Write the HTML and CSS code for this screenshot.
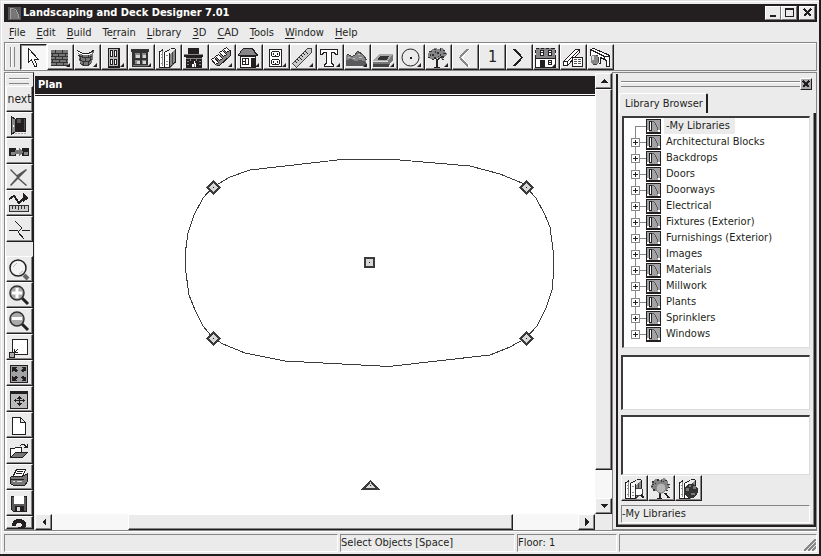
FILE: index.html
```
<!doctype html>
<html lang="en">
  <head>
    <meta charset="UTF-8" />
    <meta name="viewport" content="width=device-width, initial-scale=1.0" />
    <title>Landscaping and Deck Designer 7.01</title>
    <link rel="stylesheet" href="styles.css">
  </head>
  <body>
    <svg class="defs" aria-hidden="true">
      <symbol id="library" viewBox="0 0 15 15">
        <rect width="15" height="15" fill="#231f20" />
        <rect x="1" y="1" width="13" height="12" fill="#a2a2a4" />
        <path d="M3 2h3v10H3z" fill="#231f20" />
        <path d="M4 3h1v8H4z" fill="#fff" />
        <path d="M6 2h2v1H6zM8 3h1v1H8zM9 4h1v2H9zM10 6h1v2h-1zM11 8h1v3h-1z" fill="#5a5a5c" />
        <path d="M1 11h2v2H1zM12 11h2v2h-2z" fill="#fff" />
      </symbol>
      <symbol id="books" viewBox="0 0 24 23">
        <path d="M3 6h5v15H3zM9 6h4v15H9z" fill="#fff" />
        <path d="M14 8l5-5v14l-5 5z" fill="#8a8a8c" />
        <path d="M3 6h1v15H3zM8 6h1v15H8zM13 7h1v14h-1zM19 3h1v14h-1zM3 21h11v1H3zM3 5h2v1H3zM5 4h1v1H5zM6 3h1v2H6zM9 5h2v1H9zM11 4h2v1h-2zM13 3h1v1h-1zM15 2h4v1h-4zM14 21h1v-1h1v-1h1v-1h1v-1h1v-1h-1v1h-1v1h-1v1h-1v1h-1z" fill="#231f20" />
        <path d="M5 8h2v1H5zM5 11h2v1H5zM5 17h2v1H5zM10 9h2v1h-2zM10 15h2v1h-2zM10 18h2v1h-2zM6 5h1v15H6z" fill="#8a8a8c" />
        <path d="M16 6h1v13h-1z" fill="#444" />
      </symbol>
    </svg>

    <div class="window">
      <header class="titlebar">
        <svg class="app-icon" width="13" height="13">
          <rect width="13" height="13" fill="#555" />
          <path d="M3 2q8 2 9 10H3z" fill="#777" />
          <path d="M2 1h1v11H2zM3 1h3v1H3zM6 2h2v1H6zM8 3h1v2H8zM9 5h1v2H9zM10 7h1v4h-1z" fill="#a2a2a4" />
        </svg>
        <h1>Landscaping and Deck Designer 7.01</h1>
        <div class="window-buttons">
          <button aria-label="Minimize"><svg width="11" height="10"><path d="M2 7h6v2H2z" fill="#231f20" /></svg></button>
          <button aria-label="Maximize"><svg width="11" height="10"><path d="M1 0h9v9H1zM2 2v6h7V2z" fill="#231f20" fill-rule="evenodd" /></svg></button>
          <button class="close" aria-label="Close"><svg width="11" height="10"><path d="M2 1l7 7M9 1L2 8" stroke="#231f20" stroke-width="2" /></svg></button>
        </div>
      </header>

      <nav class="menu">
        <button><u>F</u>ile</button>
        <button><u>E</u>dit</button>
        <button><u>B</u>uild</button>
        <button>Te<u>r</u>rain</button>
        <button><u>L</u>ibrary</button>
        <button><u>3</u>D</button>
        <button><u>C</u>AD</button>
        <button><u>T</u>ools</button>
        <button><u>W</u>indow</button>
        <button><u>H</u>elp</button>
      </nav>

      <div class="toolbar">
        <span class="grip-v"></span>
        <button class="tool pressed" aria-label="Select Objects">
          <svg><path d="M7.500 2.500v14l3-3 3 7h2v-2l-2-5h4z" fill="#fff" stroke="#231f20" /></svg>
        </button>
        <button class="tool more" aria-label="Wall">
          <svg>
            <rect x="3" y="4" width="17" height="16" fill="#777" />
            <path d="M3 7.500h17M3 10.500h17M3 13.500h17M3 16.500h17M3 19.500h17M7.500 4v3M14.500 4v3M4.500 8v3M10.500 8v3M17.500 8v3M7.500 11v3M14.500 11v3M4.500 14v3M11.500 14v3M18.500 14v3M8.500 17v3M15.500 17v3" stroke="#333" />
          </svg>
        </button>
        <button class="tool more" aria-label="Curved Wall">
          <svg>
            <path d="M3 5q8 6 16-1l-2 13q-6 6-12 1z" fill="#777" />
            <path d="M3.500 9.500q8 5 14 0M4.500 13.500q7 5 12 0M5.500 17.500q6 5 10 0" fill="none" stroke="#333" />
            <path d="M7.500 8v3M13.500 8v4M5.500 11v4M10.500 12v3M15.500 11v3M8.500 15v4M13.500 15v4" stroke="#333" />
            <path d="M2.500 4.500q8 7 17-1" fill="none" stroke="#231f20" />
            <path d="M3.500 6.500q8 5 14 0" fill="none" stroke="#fff" />
          </svg>
        </button>
        <button class="tool more" aria-label="Door">
          <svg>
            <rect x="6" y="2" width="12" height="20" fill="#231f20" />
            <rect x="7" y="3" width="9" height="17" fill="#bbb" />
            <path d="M8.500 4.500h2v6h-2zM12.500 4.500h2v6h-2zM8.500 13.500h2v5h-2zM12.500 13.500h2v5h-2z" fill="#fff" stroke="#231f20" />
          </svg>
        </button>
        <button class="tool more" aria-label="Window">
          <svg>
            <path d="M2 3h18v3h-1v15H3V6H2z" fill="#333" />
            <path d="M6 7h5v5H6zM13 7h4v5h-4zM6 14h5v4H6zM13 14h4v4h-4z" fill="#888" />
            <path d="M7 9h4v3H7zM14 9h3v3h-3zM8 15h3v3H8zM14 15h3v3h-3z" fill="#d5d5d6" />
            <path d="M4 19h15v1H4z" fill="#777" />
          </svg>
        </button>
        <button class="tool" aria-label="Cabinet"><svg><use href="#books" /></svg></button>
        <button class="tool" aria-label="Fireplace">
          <svg>
            <path d="M5 2h11v6h4v3h-1v11H3V11H1V8h4z" fill="#231f20" />
            <path d="M1 8h19v1H1zM3 12h16v1H3z" fill="#868688" />
            <path d="M4 15h2v1H4zM16 15h2v1h-2zM4 18h2v1H4zM16 18h2v1h-2zM7 13h1v2H7zM13 13h1v2h-1z" fill="#868688" />
            <path d="M11 15h1v2h1v4H9v-3h2z" fill="#fff" />
            <path d="M11 18h1v3h-1z" fill="#868688" />
          </svg>
        </button>
        <button class="tool more" aria-label="Stairs">
          <svg>
            <path d="M3 14L16 4h4v6L9 20H6z" fill="#868688" />
            <path d="M1.500 13.500l3-2 4 5-3 2zM5.500 10.500l3-2 4 4-3 2zM9.500 6.500l3-2 4 4-3 2zM13.500 3.500l3-2 3 3-3 2z" fill="#fff" stroke="#231f20" />
            <path d="M6.500 19.500h3l11-10v-6" fill="none" stroke="#231f20" />
          </svg>
        </button>
        <button class="tool more" aria-label="Roof">
          <svg>
            <path d="M6 2h10l5 7v1H1V9z" fill="#231f20" />
            <path d="M6 3h9l4 6H2z" fill="#868688" />
            <path d="M3 10h16v12H3z" fill="#231f20" />
            <path d="M4 11h14v10H4z" fill="#fff" />
            <path d="M5 12h7v7H5zM14 12h4v9h-4z" fill="#231f20" />
            <path d="M6 13h2v2H6zM9 13h2v5H9zM6 16h2v2H6z" fill="#fff" />
          </svg>
        </button>
        <button class="tool more" aria-label="Electrical">
          <svg>
            <rect x="5.500" y="3.500" width="12" height="17" rx="1" fill="#fff" stroke="#231f20" />
            <path d="M8 5h7v1H8zM7 6h1v4H7zM15 6h1v4h-1zM8 10h7v1H8zM8 13h7v1H8zM7 14h1v4H7zM15 14h1v4h-1zM8 18h7v1H8zM9 7h1v2H9zM13 7h1v2h-1zM11 9h1v1h-1zM9 15h1v2H9zM13 15h1v2h-1zM11 17h1v1h-1z" fill="#231f20" />
          </svg>
        </button>
        <button class="tool more" aria-label="Dimension">
          <svg>
            <path d="M1.500 17.500l15-15h4v4l-15 15z" fill="#ccc" stroke="#444" />
            <path d="M4 15l2 2M6 13l2 2M8 11l3 3M10 9l2 2M12 7l2 2M14 5l3 3" stroke="#231f20" />
          </svg>
        </button>
        <button class="tool more" aria-label="Text">
          <svg><path d="M2.500 3.500h17v5h-2l-1-2h-3v11l2 1v2h-9v-2l2-1v-11h-3l-1 2h-2z" fill="#fff" stroke="#231f20" /></svg>
        </button>
        <button class="tool more" aria-label="Terrain">
          <svg>
            <path d="M1 9h2l3 1 3-1 3-3 4 1 3 3 2 4v6H1z" fill="#868688" />
            <path d="M1 14l5-1 4 2 6-1 5 2v4H1z" fill="#5a5a5c" />
            <path d="M1.500 8.500h2l3 2 3-1 3-4 4 2 3 3 2 4" fill="none" stroke="#444" />
            <path d="M3 11h2v1H3zM8 12h2v1H8zM13 8h2v1h-2zM14 11h3v1h-3z" fill="#bbb" />
          </svg>
        </button>
        <button class="tool more" aria-label="Pool">
          <svg>
            <path d="M1 15l6-7h14v6l-5 7H1z" fill="#777" />
            <path d="M1 15l6-7h14l-5 7z" fill="#aaa" />
            <path d="M5 13l3-3h9l-2 4H7z" fill="#333" />
            <path d="M1 15h15v1H1z" fill="#ddd" />
            <path d="M1 18h16v3H1z" fill="#444" />
          </svg>
        </button>
        <button class="tool more" aria-label="Circle">
          <svg>
            <circle class="smooth" cx="11.500" cy="11.500" r="8.500" fill="none" stroke="#231f20" />
            <rect x="11" y="11" width="2" height="2" fill="#231f20" />
          </svg>
        </button>
        <button class="tool more" aria-label="Plant">
          <svg>
            <path d="M7 3l2-1 4 1 4-1 2 3 2 3-2 2-2 3-4-1-4 1H5l-3-2V8l2-3z" fill="#868688" />
            <path d="M3 5h3v1H3zM8 3h2v1H8zM14 2h1v3h-1zM17 7h3v1h-3zM11 6h2v2h-2zM6 8h2v2H6zM2 11h2v1H2zM15 10h3v2h-3zM8 11h2v2H8zM17 4h2v1h-2zM9 5h1v2H9zM4 8h1v2H4zM14 8h1v2h-1zM12 10h1v1h-1zM6 13h2v1H6zM16 13h2v1h-2z" fill="#333" />
            <path d="M10 21v-7l-3-3 4 2 4-2-3 3v7zM8 21h6v1H8z" fill="#231f20" />
          </svg>
        </button>
        <button class="tool" aria-label="Previous floor">
          <svg><path d="M15 3L7 11.500l8 9" fill="none" stroke="#888" stroke-width="2" /><path d="M17 3l-8 8.500 8 9" fill="none" stroke="#fff" /></svg>
        </button>
        <button class="tool floor">1</button>
        <button class="tool" aria-label="Next floor">
          <svg><path d="M7 3l8 8.500-8 8.500" fill="none" stroke="#231f20" stroke-width="2" /></svg>
        </button>
        <button class="tool more" aria-label="Reference floor">
          <svg>
            <path d="M2 2h19v10H2z" fill="#868688" />
            <path d="M2 2h3v1H2zM7 2h3v1H7zM12 2h3v1h-3zM17 2h4v1h-4zM1 4h1v3H1zM1 9h1v3H1zM21 4h1v3h-1zM21 9h1v3h-1zM1 12h21v1H1zM1 13h1v8H1zM21 13h1v8h-1zM1 21h21v1H1z" fill="#231f20" />
            <path d="M2 13h19v8H2z" fill="#fff" />
            <path d="M6 4h4v6H6zM14 4h4v6h-4zM14 14h4v5h-4zM6 14h5v7H6z" fill="#231f20" />
            <path d="M7 5h2v1H7zM7 7h2v2H7zM15 5h2v1h-2zM15 7h2v2h-2zM15 15h2v1h-2zM15 17h2v1h-2z" fill="#fff" />
          </svg>
        </button>
        <button class="tool" aria-label="Materials list">
          <svg>
            <path d="M2.500 15.500l12-12h4v3l-12 13h-4zM2.500 15.500h4v4M6.500 15.500l12-12" fill="#fff" stroke="#231f20" />
            <rect x="11.500" y="11.500" width="10" height="9" fill="#fff" stroke="#231f20" />
            <path d="M13 13h3v1h-3zM17 13h3v1h-3zM13 15h3v1h-3zM17 15h3v1h-3zM13 17h3v1h-3zM17 17h3v1h-3z" fill="#555" />
          </svg>
        </button>
        <button class="tool" aria-label="Camera view">
          <svg>
            <path d="M2.500 9.500v-6l3-1 12 5 4 2v11h-3v-6l-6-3v6l-5-2" fill="#fff" stroke="#231f20" />
            <path d="M2.500 3.500l14 7h5M16.500 10.500v3" fill="none" stroke="#231f20" />
            <path d="M4 9h4l3 3v4l-3 3H5l-2-3v-4z" fill="#868688" />
            <path d="M4 10h2v4H4z" fill="#ddd" />
            <path d="M8 9h2v1H8zM10 11h1v5h-1zM5 18h4v1H5z" fill="#444" />
          </svg>
        </button>
      </div>

      <main class="workspace">
        <aside class="sidebar">
          <span class="grip-h"></span>
          <button class="tool next">next</button>
          <button class="tool" aria-label="Open object">
            <svg>
              <path d="M9 4h10v14H9z" fill="#231f20" />
              <path d="M4.500 2.500l4 3v12l-4 3z" fill="#888" stroke="#231f20" />
              <path d="M10 5h4v4h-4zM17 5h1v11h-1z" fill="#555" />
              <path d="M6 11h1v2H6z" fill="#fff" />
              <path d="M8 19h11" stroke="#aaa" stroke-dasharray="2 1" />
            </svg>
          </button>
          <button class="tool" aria-label="Replicate">
            <svg>
              <path d="M2 8h7v8H2zM15 8h7v8h-7z" fill="#231f20" />
              <path d="M4 12h4v3H4zM17 12h4v3h-4z" fill="#888" />
              <path d="M8 10h4V8l4 4-4 4v-2H8z" fill="#777" />
            </svg>
          </button>
          <button class="tool" aria-label="Delete">
            <svg class="smooth"><path d="M4 3l6 6 9-6 1 1-8 8 8 7-1 1-8-7-7 7-1-1 7-8-7-7z" fill="#555" /></svg>
          </button>
          <button class="tool" aria-label="Point to point move">
            <svg>
              <path d="M2 7l5-3 5 7 5-5h3" fill="none" stroke="#231f20" stroke-width="2" />
              <path d="M16 1l6 5-6 4z" fill="#231f20" />
              <path d="M2.500 13.500h19v6h-19z" fill="#ccc" stroke="#333" />
              <path d="M5.500 14v3M8.500 14v3M11.500 14v4M14.500 14v3M17.500 14v3" stroke="#333" />
            </svg>
          </button>
          <button class="tool" aria-label="Break line">
            <svg><path d="M8 3l7 7-4 4 6 7M2 12.500h9M15 12.500h8" fill="none" stroke="#231f20" /></svg>
          </button>
          <span class="tool-gap"></span>
          <button class="tool" aria-label="Zoom">
            <svg class="smooth"><circle cx="11" cy="10" r="8" fill="#f3f3f3" stroke="#231f20" stroke-width="1.500" /><path d="M6 9l4-4M16 13l-4 3" stroke="#bbb" /><path d="M17 17l4 4" stroke="#666" stroke-width="4" /></svg>
          </button>
          <button class="tool" aria-label="Zoom in">
            <svg class="smooth"><path d="M15 14l6 6" stroke="#231f20" stroke-width="3" /><circle cx="10" cy="9" r="7" fill="#aaa" stroke="#333" stroke-width="1.500" /><path d="M5 9h10M10 4v10" stroke="#fff" stroke-width="3" /></svg>
          </button>
          <button class="tool" aria-label="Zoom out">
            <svg class="smooth"><path d="M15 14l6 6" stroke="#231f20" stroke-width="3" /><circle cx="10" cy="9" r="7" fill="#aaa" stroke="#333" stroke-width="1.500" /><path d="M5 8.500h10" stroke="#fff" stroke-width="3" /></svg>
          </button>
          <button class="tool" aria-label="Undo zoom">
            <svg><rect x="5.500" y="3.500" width="15" height="15" fill="#fff" stroke="#231f20" /><rect x="2.500" y="16.500" width="5" height="5" fill="#aaa" stroke="#231f20" /><path d="M7 13h1v3h3v1H7zM8 15h1v-1h1v-1h1v1h-1v1H9v1H8z" fill="#231f20" /></svg>
          </button>
          <button class="tool" aria-label="Fill window">
            <svg><rect x="3.500" y="3.500" width="17" height="17" fill="#a2a2a4" stroke="#231f20" /><path d="M5 5h5L8.500 6.500l2 2-2 2-2-2L5 10zM19 5v5l-1.500-1.500-2 2-2-2 2-2L14 5zM5 19v-5l1.500 1.500 2-2 2 2-2 2L10 19zM19 19h-5l1.500-1.500-2-2 2-2 2 2L19 14z" fill="#231f20" /></svg>
          </button>
          <button class="tool" aria-label="Pan window">
            <svg><rect x="3.500" y="3.500" width="17" height="17" fill="#bbb" stroke="#231f20" /><path d="M3 3h18v3H3zM12 8h1v10h-1zM7 12h11v1H7zM11 9h3v1h-3zM10 10h5v1h-5zM10 15h5v1h-5zM11 16h3v1h-3zM8 11h1v3H8zM16 11h1v3h-1z" fill="#231f20" /></svg>
          </button>
          <button class="tool" aria-label="New">
            <svg><path d="M5.500 3.500h8l5 5v12h-13zM13.500 3.500v5h5" fill="#fff" stroke="#231f20" /></svg>
          </button>
          <button class="tool" aria-label="Open">
            <svg><path d="M3.500 17.500v-9h4l1-1h6v4" fill="#fff" stroke="#231f20" /><path d="M3.500 17.500l5-5h12l-5 5z" fill="#777" stroke="#231f20" /><path d="M13 5h1V4h4v1h1v1h1V4h1v4h-4V7h1V6h-1V5h-3v1h-1z" fill="#231f20" /></svg>
          </button>
          <button class="tool" aria-label="Print">
            <svg><path d="M3.500 11.500l3-2h11l3-2v8l-3 4h-11l-3-2z" fill="#777" stroke="#231f20" /><path d="M6.500 9.500l3-6h9l-3 7h-9z" fill="#fff" stroke="#231f20" /><path d="M10 5h6v1h-6zM9 7h6v1H9zM4 13h13v1H4z" fill="#231f20" /><path d="M6 15h2v1H6zM10 15h5v1h-5z" fill="#ddd" /></svg>
          </button>
          <button class="tool" aria-label="Save">
            <svg><path d="M4 4h16v16H6l-2-2z" fill="#231f20" /><path d="M5 5h14v14H6l-1-1z" fill="#5a5a5c" /><path d="M7 4h10v8H7z" fill="#fff" /><path d="M8 14h9v6H8z" fill="#231f20" /><path d="M10 15h3v4h-3z" fill="#ddd" /></svg>
          </button>
          <button class="tool cut" aria-label="Help">
            <svg><path d="M7 9V7q1-3 5-3 5 0 5 4 0 3-4 4v6" fill="none" stroke="#231f20" stroke-width="4" /></svg>
          </button>
        </aside>

        <section class="plan">
          <h2>Plan</h2>
          <div class="scroll scroll-v">
            <button class="arrow" aria-label="Scroll up"><svg width="8" height="4"><path d="M4 0l4 4H0z" /></svg></button>
            <div class="thumb"></div>
            <div class="track"></div>
            <button class="arrow" aria-label="Scroll down"><svg width="8" height="4"><path d="M0 0h8L4 4z" /></svg></button>
          </div>
          <svg class="drawing">
            <path class="outline" d="M178 91L195 81 215 74 311 63H353L435 70 465 78 487 87 491 91 501 102 510 119 515 131 518 154 519 172 517 194 511 212 502 230 491 242 475 251 455 259 358 270H345L250 265 210 257 188 248 178 242 168 230 160 214 154 199 151 177 150 159 153 137 159 119 168 102z" />
            <g class="handles">
              <path d="M178.500 85.500l6 6-6 6-6-6z" />
              <path d="M491.500 85.500l6 6-6 6-6-6z" />
              <path d="M178.500 236.500l6 6-6 6-6-6z" />
              <path d="M491.500 236.500l6 6-6 6-6-6z" />
              <path d="M330 162h9v9h-9z" />
              <path d="M335.500 385l7 7.500h-14z" />
            </g>
            <path class="dots" d="M178 91h1v1h-1zM491 91h1v1h-1zM178 242h1v1h-1zM491 242h1v1h-1zM334 166h1v1h-1zM335 389h1v1h-1z" />
          </svg>
          <div class="scroll scroll-h">
            <button class="arrow" aria-label="Scroll left"><svg width="4" height="8"><path d="M4 0v8L0 4z" /></svg></button>
            <div class="track"></div>
            <div class="thumb"></div>
            <div class="track"></div>
            <button class="arrow" aria-label="Scroll right"><svg width="4" height="8"><path d="M0 0l4 4-4 4z" /></svg></button>
          </div>
        </section>

        <aside class="browser">
          <div class="browser-head">
            <span class="grip-h"></span>
            <button class="browser-close" aria-label="Close Library Browser"><svg width="8" height="8"><path d="M1 1l6 6M7 1L1 7" stroke="#231f20" stroke-width="2" /></svg></button>
          </div>
          <div class="tabs"><button class="tab">Library Browser</button></div>
          <div class="tab-page">
            <ul class="tree">
              <li class="root selected"><svg><use href="#library" /></svg><span>-My Libraries</span></li>
              <li><button aria-label="Expand"></button><svg><use href="#library" /></svg><span>Architectural Blocks</span></li>
              <li><button aria-label="Expand"></button><svg><use href="#library" /></svg><span>Backdrops</span></li>
              <li><button aria-label="Expand"></button><svg><use href="#library" /></svg><span>Doors</span></li>
              <li><button aria-label="Expand"></button><svg><use href="#library" /></svg><span>Doorways</span></li>
              <li><button aria-label="Expand"></button><svg><use href="#library" /></svg><span>Electrical</span></li>
              <li><button aria-label="Expand"></button><svg><use href="#library" /></svg><span>Fixtures (Exterior)</span></li>
              <li><button aria-label="Expand"></button><svg><use href="#library" /></svg><span>Furnishings (Exterior)</span></li>
              <li><button aria-label="Expand"></button><svg><use href="#library" /></svg><span>Images</span></li>
              <li><button aria-label="Expand"></button><svg><use href="#library" /></svg><span>Materials</span></li>
              <li><button aria-label="Expand"></button><svg><use href="#library" /></svg><span>Millwork</span></li>
              <li><button aria-label="Expand"></button><svg><use href="#library" /></svg><span>Plants</span></li>
              <li><button aria-label="Expand"></button><svg><use href="#library" /></svg><span>Sprinklers</span></li>
              <li><button aria-label="Expand"></button><svg><use href="#library" /></svg><span>Windows</span></li>
            </ul>
            <div class="preview"></div>
            <div class="preview details"></div>
            <div class="browser-tools">
              <button class="tool" aria-label="Search library">
                <svg><use href="#books" /><circle cx="17" cy="15" r="4" fill="#fff" stroke="#444" /><path d="M19 18l3 3" stroke="#231f20" stroke-width="2" /></svg>
              </button>
              <button class="tool" aria-label="Plant chooser">
                <svg>
                  <path d="M3 5l4-3 4 1 4-2 4 3 1 5-2 4-4 1H6l-4-3z" fill="#868688" />
                  <path d="M3 4h2v2H3zM8 2h2v2H8zM16 3h2v1h-2zM18 7h3v1h-3zM2 9h2v1H2zM4 12h2v2H4zM12 3h1v2h-1zM6 6h1v1H6zM3 7h2v1H3zM19 10h2v1h-2zM17 13h2v1h-2zM14 4h1v1h-1z" fill="#333" />
                  <path d="M10 16h2v5h-2zM8 21h5v1H8z" fill="#231f20" />
                  <circle class="smooth" cx="12" cy="11" r="5" fill="#b5b5b6" stroke="#777" />
                  <path d="M16 16l4 5" stroke="#231f20" stroke-width="2" />
                </svg>
              </button>
              <button class="tool" aria-label="Web library">
                <svg><use href="#books" /><circle cx="15" cy="14" r="7" fill="#333" /><path d="M10 11h3v3h-3zM17 9h3v3h-3zM15 16h4v2h-4zM13 8h2v2h-2z" fill="#777" /></svg>
              </button>
            </div>
            <div class="path">-My Libraries</div>
          </div>
        </aside>
      </main>

      <footer class="status">
        <span></span>
        <span>Select Objects [Space]</span>
        <span>Floor: 1</span>
        <span><svg class="resize" width="12" height="12"><path d="M0 12L12 0M4 12l8-8M8 12l4-4" stroke="#888" stroke-width="2" /></svg></span>
      </footer>
    </div>
  </body>
</html>
```
FILE: styles.css
```
* {
  margin: 0;
  padding: 0;
  box-sizing: border-box;
}

body {
  font-family: 'DejaVu Sans Condensed', 'DejaVu Sans', sans-serif;
  font-size: 11px;
  line-height: 16px;
  color: #231f20;
  background: #ebebec;
}

button {
  font: inherit;
  color: inherit;
  background: #ebebec;
  border: none;
}

svg {
  display: block;
  shape-rendering: crispEdges;
}

.smooth {
  shape-rendering: auto;
}

.defs {
  position: absolute;
  width: 0;
  height: 0;
}

.window {
  display: flex;
  flex-direction: column;
  height: 100vh;
  min-height: 540px;
  padding: 4px 2px 2px 4px;
  border-right: 2px solid #231f20;
  border-bottom: 2px solid #231f20;
  box-shadow: inset 1px 1px #e0e0e0, inset 2px 2px #fff;
}

/* Title bar and menu */
.titlebar {
  display: flex;
  align-items: center;
  height: 18px;
  padding: 0 2px 0 4px;
  background: #231f20;
  color: #fff;
}

.titlebar h1 {
  flex: 1;
  margin-left: 2px;
  font-size: 11px;
  font-weight: bold;
}

.window-buttons {
  display: flex;
}

.window-buttons button {
  display: flex;
  align-items: center;
  justify-content: center;
  width: 16px;
  height: 14px;
  border: 1px solid;
  border-color: #fff #777 #777 #fff;
}

.window-buttons .close {
  margin-left: 2px;
}

.menu {
  display: flex;
  height: 20px;
  padding: 1px 0 0 5px;
  gap: 11px;
}

.menu u {
  text-underline-offset: 2px;
}

/* Tool buttons */
.toolbar {
  display: flex;
  flex: none;
  height: 29px;
  padding-top: 1px;
  border: 1px solid #868688;
  box-shadow: inset 1px 1px #fff;
}

.grip-v {
  width: 5px;
  margin: 3px 5px;
  border: solid #868688;
  border-width: 0 1px;
  box-shadow: inset 1px 0 #fff;
}

.grip-h {
  height: 6px;
  border: solid #868688;
  border-width: 1px 0;
  box-shadow: inset 0 1px #fff;
}

.tool {
  position: relative;
  flex: none;
  width: 27px;
  height: 26px;
  border: solid;
  border-width: 1px;
  border-color: #fff #231f20 #231f20 #fff;
  box-shadow: inset -1px -1px #868688;
  overflow: hidden;
}

.tool svg {
  width: 24px;
  height: 23px;
}

.tool.pressed {
  background: #f6f6f6;
  border-color: #231f20 #fff #fff #231f20;
  box-shadow: inset 1px 1px #868688;
}

.tool.more::after {
  content: '';
  position: absolute;
  right: 3px;
  bottom: 2px;
  width: 4px;
  height: 4px;
  background: #231f20;
  clip-path: polygon(100% 0, 100% 100%, 0 100%);
}

.tool.floor {
  font-size: 16px;
}

.workspace {
  display: flex;
  flex: 1;
  min-height: 0;
  margin-top: 1px;
}

.sidebar {
  display: flex;
  flex-direction: column;
  width: 30px;
  padding: 5px 0 0 1px;
  border: 1px solid #868688;
  border-right-color: #231f20;
  box-shadow: inset 1px 1px #fff;
  overflow: hidden;
}

.sidebar .grip-h {
  flex: none;
  margin: 0 4px 2px 3px;
}

.sidebar .next {
  font-size: 12px;
}

.sidebar .cut {
  flex: 0 1 26px;
  min-height: 0;
}

.tool-gap {
  flex: none;
  height: 14px;
}

/* Plan window */
.plan {
  display: grid;
  flex: 1;
  grid-template-columns: 1fr 17px;
  grid-template-rows: 20px 1fr 16px;
  min-width: 0;
  margin: 4px 0 0 1px;
}

.plan h2 {
  height: 18px;
  padding-left: 3px;
  line-height: 18px;
  font-size: 11px;
  background: #231f20;
  color: #fff;
  box-shadow: 0 1px #fff, 0 2px #231f20;
}

.drawing {
  width: 100%;
  height: 100%;
  background: #fff;
}

.outline {
  fill: none;
  stroke: #3c3a3b;
}

.handles {
  fill: #d8d8d8;
  stroke: #3c3a3b;
  stroke-width: 2px;
}

.dots {
  fill: #231f20;
}

.scroll {
  display: flex;
  background: #f7f7f8;
}

.scroll-v {
  grid-column: 2;
  grid-row: 1 / 3;
  flex-direction: column;
  margin-top: -3px;
}

.scroll .arrow,
.scroll .thumb {
  border: 1px solid;
  border-color: #fff #231f20 #231f20 #fff;
  box-shadow: inset -1px -1px #868688;
  background: #ebebec;
}

.scroll .arrow {
  display: flex;
  flex: none;
  align-items: center;
  justify-content: center;
  width: 17px;
  height: 16px;
}

.arrow svg {
  fill: #231f20;
}

.scroll-v .thumb {
  flex: 382;
}

.scroll-v .track {
  flex: 28;
}

.scroll-h .thumb {
  flex: 385;
}

.scroll-h .track {
  flex: 66;
}

.scroll-h .track:nth-child(2) {
  flex: 77;
}

/* Library browser */
.browser {
  display: flex;
  flex-direction: column;
  width: 205px;
  padding: 1px 0 2px 3px;
  border: 1px solid #868688;
}

.browser-head {
  display: flex;
  align-items: center;
  height: 19px;
  padding: 1px 4px 0 3px;
  border-left: 2px solid #231f20;
}

.browser-head .grip-h {
  flex: 1;
}

.browser-close {
  display: flex;
  align-items: center;
  justify-content: center;
  width: 12px;
  height: 12px;
  border: 1px solid;
  border-color: #fff #231f20 #231f20 #fff;
  background: #aaa;
}

.tabs {
  height: 20px;
  padding-left: 1px;
  border-left: 2px solid #231f20;
}

.tab {
  height: 20px;
  padding: 0 3px 0 5px;
  border: solid;
  border-width: 1px 2px 0 1px;
  border-color: #fff #231f20 #fff #fff;
  border-radius: 2px 2px 0 0;
}

.tab-page {
  display: flex;
  flex: 1;
  flex-direction: column;
  min-height: 0;
  padding: 3px 4px 2px 3px;
  border: solid #231f20;
  border-width: 0 2px 2px;
  box-shadow: inset -1px -1px #868688;
}

.tree,
.preview {
  background: #fff;
  border: solid;
  border-width: 2px 1px 1px 2px;
  border-color: #3c3a3b #dcdcdd #dcdcdd #3c3a3b;
}

.tree {
  flex: 1;
  min-height: 0;
  margin-left: 1px;
  padding: 0 0 0 7px;
  list-style: none;
  overflow: hidden;
}

.tree li {
  display: flex;
  align-items: center;
  height: 16px;
  background: linear-gradient(#868688, #868688) 4px 0 / 1px 16px no-repeat,
    linear-gradient(#868688, #868688) 4px 8px / 11px 1px no-repeat;
}

.tree li.root {
  padding-left: 9px;
  background-position: 4px 8px;
}

.tree li:last-child {
  background-size: 1px 8px, 11px 1px;
}

.tree button {
  width: 9px;
  height: 9px;
  border: 1px solid #868688;
  background: linear-gradient(#231f20, #231f20) center / 5px 1px no-repeat,
    linear-gradient(#231f20, #231f20) center / 1px 5px no-repeat, #fff;
}

.tree svg {
  width: 15px;
  height: 15px;
  margin: 0 3px 0 6px;
}

.tree span {
  padding: 0 2px;
}

.tree .selected span {
  padding-right: 5px;
  background: #ebebec;
}

.preview {
  flex: none;
  height: 55px;
  margin-top: 7px;
}

.details {
  height: 60px;
  margin-top: 5px;
}

.browser-tools {
  display: flex;
}

.path {
  height: 18px;
  margin-top: 4px;
  border: 1px solid;
  border-color: #868688 #fff #fff #868688;
}

/* Status bar */
.status {
  display: grid;
  grid-template-columns: 334px 175px 100px 1fr;
  column-gap: 2px;
  flex: none;
  height: 22px;
  padding-top: 3px;
  border-top: 1px solid #868688;
  box-shadow: inset 0 1px #fff;
}

.status span {
  position: relative;
  height: 18px;
  border: 1px solid;
  border-color: #868688 #fff #fff #868688;
}

.resize {
  position: absolute;
  right: 0;
  bottom: 0;
}
```
